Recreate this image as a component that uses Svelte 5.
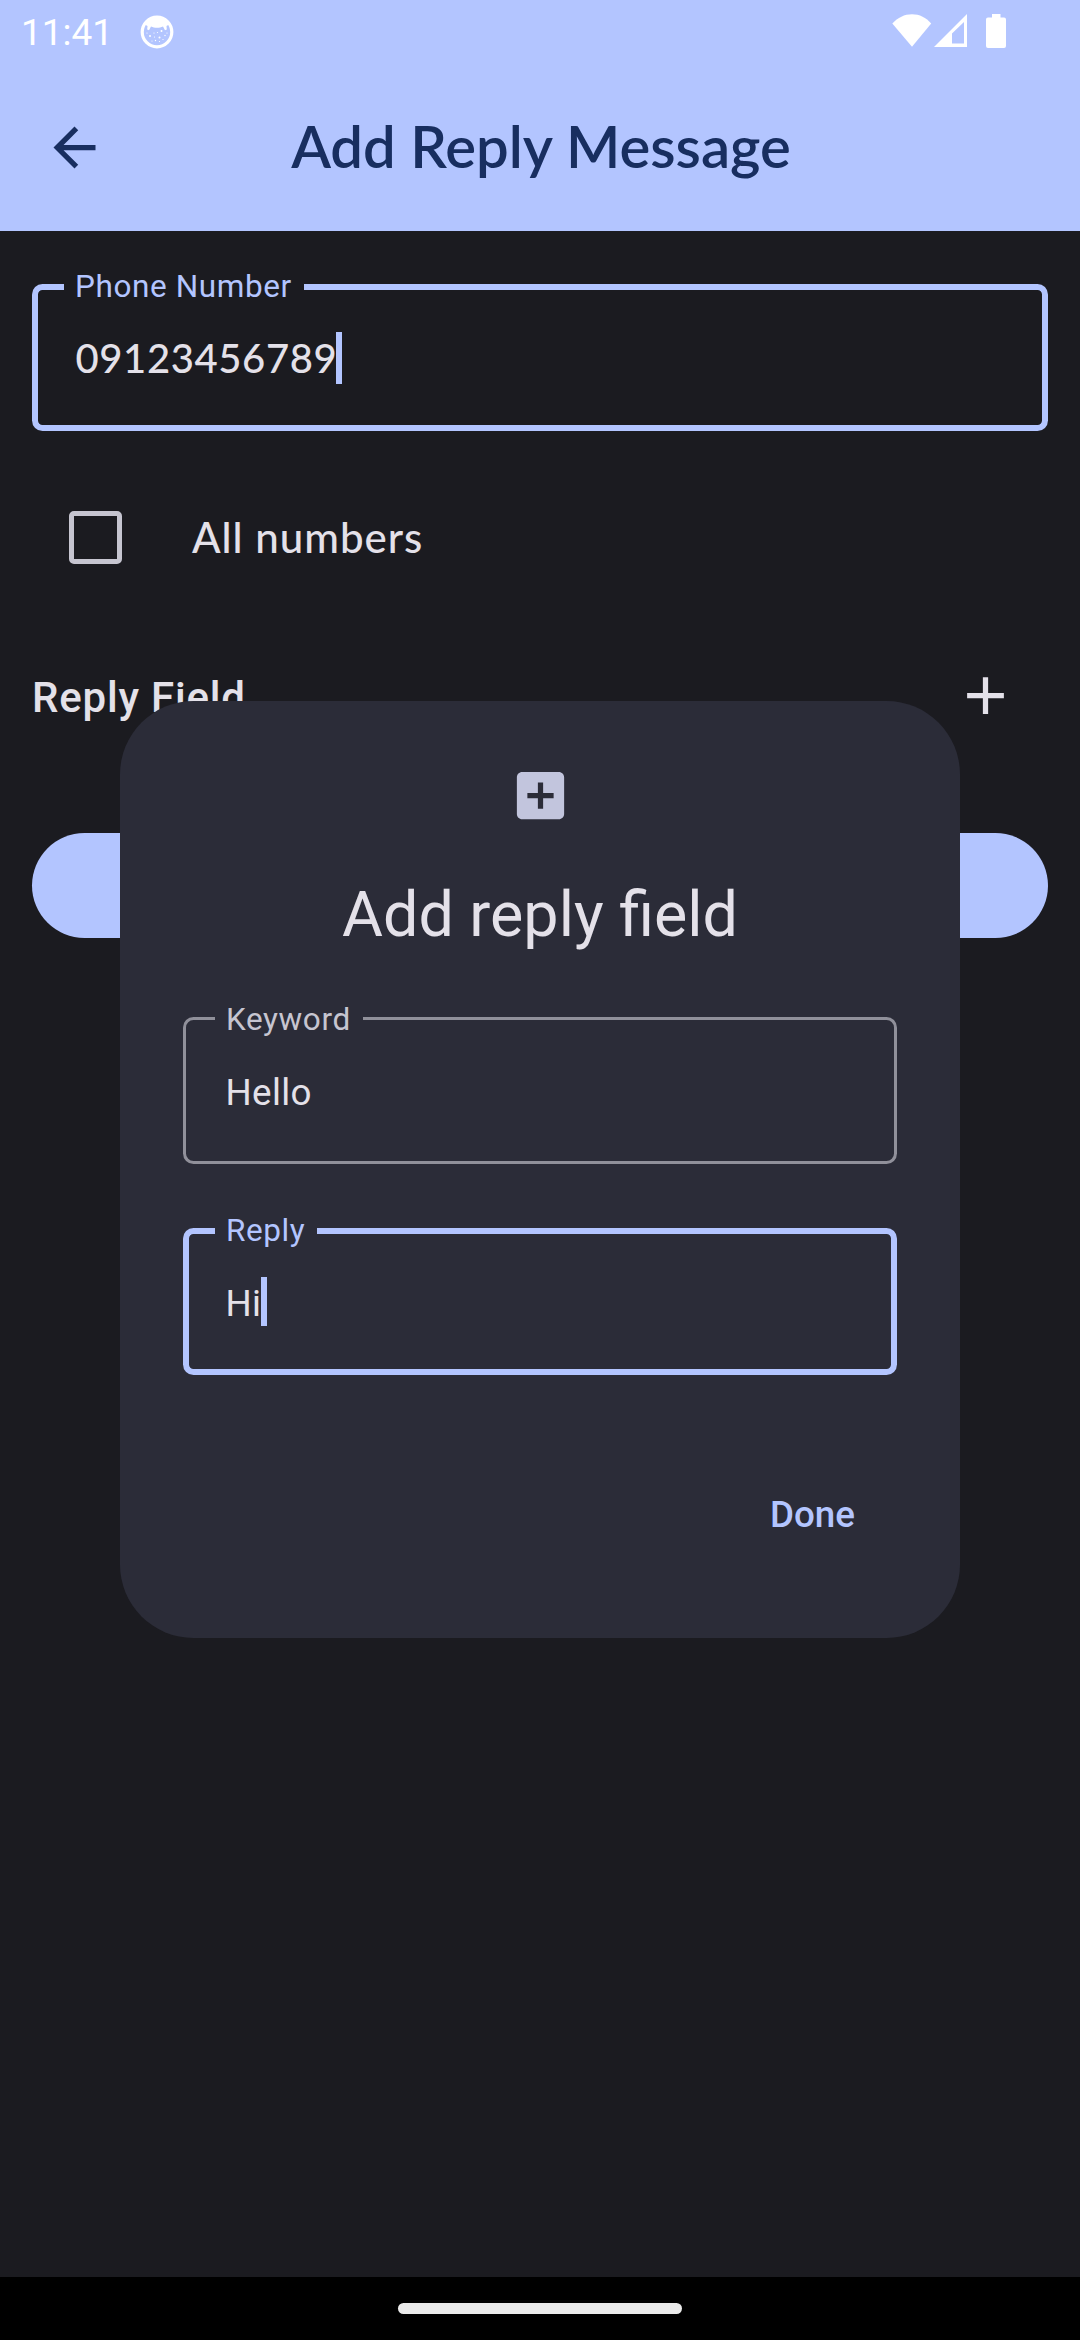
<script>
  let phone = $state('09123456789');
  const dialogFields = [
    { label: 'Keyword', value: 'Hello', focused: false },
    { label: 'Reply', value: 'Hi', focused: true }
  ];
</script>

<div class="screen">
  <header>
    <div class="status">
      <span class="time">11:41</span>
      <svg class="notif" width="34" height="34" viewBox="0 0 34 34">
        <circle cx="17" cy="17" r="14.8" fill="none" stroke="#fff" stroke-width="3.2" />
        <path d="M4 9C8 3 12 2 17 2S26 3 30 9L26.500 11l.3 3.500-1.800.8-2-3.800C19.500 13.300 14.500 13.300 11 11.500l-2 3.800-1.800-.8 .3-3.500z" fill="#fff" />
        <g fill="#fff">
          <circle cx="10" cy="21" r="1" /><circle cx="14" cy="18" r=".6" /><circle cx="21.500" cy="16" r="1" />
          <circle cx="19.500" cy="22.500" r="1" /><circle cx="25" cy="20.500" r=".7" /><circle cx="15.500" cy="25.500" r=".7" />
          <circle cx="7" cy="18" r=".6" /><circle cx="27" cy="18" r=".6" /><circle cx="17.500" cy="17.500" r=".6" />
          <circle cx="14.500" cy="22" r=".6" /><circle cx="19.500" cy="26.500" r=".6" /><circle cx="23" cy="24.500" r=".6" />
          <circle cx="12" cy="26" r=".6" />
        </g>
      </svg>
      <svg class="wifi" width="40" height="34" viewBox="0 0 40 34" fill="#fff">
        <path d="M20 32.800 .3 9.500C5.800 3.500 12.500.2 20 .2S34.200 3.500 39.200 9.500z" />
      </svg>
      <svg class="signal" width="33" height="33" viewBox="0 0 33 33" fill="#fff">
        <path fill-rule="evenodd" d="M33 0v33H0zM30 8 18 19.500V29.500h12z" />
      </svg>
      <svg class="battery" width="20" height="34" viewBox="0 0 20 34" fill="#fff">
        <path d="M6 0h8.500v3.500H18a2 2 0 0 1 2 2V32a2 2 0 0 1-2 2H2a2 2 0 0 1-2-2V5.500a2 2 0 0 1 2-2h4z" />
      </svg>
    </div>
    <div class="toolbar">
      <svg class="back" viewBox="0 0 24 24" fill="#182e60">
        <path d="M20 11H7.830l5.590-5.590L12 4l-8 8 8 8 1.410-1.410L7.830 13H20v-2z" />
      </svg>
      <h1>Add Reply Message</h1>
    </div>
  </header>

  <main>
    <div class="field focused phone">
      <span class="label">Phone Number</span>
      <span class="value">{phone}</span><i class="caret"></i>
    </div>

    <div class="check-row">
      <span class="checkbox"></span>
      <span class="check-text">All numbers</span>
    </div>

    <div class="reply-row">
      <h2>Reply Field</h2>
      <svg class="plus" viewBox="0 0 24 24" fill="#e4e1e9"><path d="M19 13h-6v6h-2v-6H5v-2h6V5h2v6h6v2z" /></svg>
    </div>

    <div class="submit"></div>
  </main>

  <nav><span class="pill"></span></nav>

  <section class="dialog">
    <svg class="dialog-icon" viewBox="0 0 24 24" fill="#c2c5dd">
      <path d="M19 3H5c-1.110 0-2 .9-2 2v14c0 1.100.89 2 2 2h14c1.100 0 2-.9 2-2V5c0-1.100-.9-2-2-2zm-2 10h-4v4h-2v-4H7v-2h4V7h2v4h4v2z" />
    </svg>
    <h3>Add reply field</h3>
    {#each dialogFields as f}
      <div class="field" class:focused={f.focused}>
        <span class="label">{f.label}</span>
        <span class="value">{f.value}</span>{#if f.focused}<i class="caret"></i>{/if}
      </div>
    {/each}
    <button>Done</button>
  </section>
</div>

<style>
  :global(body) { margin: 0; background: #1b1b20; }
  .screen {
    --primary: #b3c5ff;
    --surface: #1b1b20;
    position: relative;
    display: flex;
    flex-direction: column;
    width: 1080px;
    height: 2340px;
    overflow: hidden;
    background: var(--surface);
    color: #e4e1e9;
    font-family: Roboto, 'Liberation Sans', sans-serif;
  }
  h1, h2, h3 { margin: 0; }
  svg { display: block; flex: none; }

  header { height: 231px; background: var(--primary); }
  .status {
    display: flex;
    align-items: flex-start;
    box-sizing: border-box;
    height: 63px;
    padding: 14px 74px 0 21px;
    color: #fff;
  }
  .time { width: 119px; font-size: 37px; line-height: 37px; }
  .notif { margin: 1px auto 0 0; }
  .signal { margin-left: 2px; }
  .battery { margin-left: 19px; }
  .toolbar {
    display: grid;
    grid-template-columns: 63px 1fr 63px;
    align-items: center;
    height: 168px;
    padding: 0 43px;
  }
  .back { width: 63px; height: 63px; }
  h1 {
    padding: 0 0 3px 2px;
    color: #182e60;
    font: 600 58px/74px Lato, sans-serif;
    text-align: center;
  }

  main { flex: 1; padding: 53px 32px 0; }
  .field {
    position: relative;
    display: flex;
    align-items: center;
    box-sizing: border-box;
    height: 147px;
    padding-left: 42.5px;
    border-radius: 10.5px;
    box-shadow: inset 0 0 0 3px #90909a;
  }
  .field.focused { box-shadow: inset 0 0 0 6px var(--primary); }
  .label {
    position: absolute;
    top: -17px;
    left: 32px;
    padding: 0 12px 0 11px;
    background: var(--surface);
    color: #c6c5d0;
    font-size: 31.5px;
    line-height: 40px;
    letter-spacing: 0.6px;
    white-space: nowrap;
  }
  .focused .label { color: var(--primary); }
  .value { padding-top: 4px; font-size: 36.75px; line-height: 46px; letter-spacing: 0.35px; }
  .phone { padding-left: 43.5px; }
  .phone .value { padding-top: 0; font: 500 40px/52px Lato, sans-serif; letter-spacing: 0.6px; }
  .caret { width: 6px; height: 49px; background: var(--primary); }
  .phone .caret { height: 52px; margin-left: -1px; }

  .check-row { display: flex; align-items: center; height: 126px; margin-top: 43.5px; padding-left: 37px; }
  .checkbox { box-sizing: border-box; width: 53px; height: 53px; border: 5px solid #c6c5d0; border-radius: 5px; }
  .check-text { margin-left: 70px; padding-bottom: 2px; font: 500 42px/56px Lato, sans-serif; letter-spacing: 1px; }

  .reply-row { display: flex; align-items: center; justify-content: space-between; height: 126px; margin-top: 32px; }
  h2 { padding-top: 5px; font-size: 42px; font-weight: 500; line-height: 56px; letter-spacing: 0.8px; }
  .plus { width: 63px; height: 63px; margin-right: 31px; }
  .submit { height: 105px; margin-top: 74.5px; border-radius: 52.5px; background: var(--primary); }

  nav { display: flex; align-items: center; justify-content: center; height: 63px; background: #000; }
  .pill { width: 284px; height: 11px; border-radius: 6px; background: #ebebeb; }

  .dialog {
    --surface: #2b2c38;
    position: absolute;
    top: 701px;
    left: 120px;
    display: flex;
    flex-direction: column;
    box-sizing: border-box;
    width: 840px;
    height: 937px;
    padding: 63px 63px 71px;
    border-radius: 73.5px;
    background: var(--surface);
  }
  .dialog-icon { align-self: center; width: 63px; height: 63px; }
  h3 { margin: 46px 0 60px; font-size: 62.8px; font-weight: 400; line-height: 84px; text-align: center; }
  .field + .field { margin-top: 64px; }
  button {
    align-self: flex-end;
    height: 105px;
    margin-top: 87px;
    padding: 0 42px;
    border: 0;
    background: none;
    color: var(--primary);
    font: 500 36.75px/52px Roboto, sans-serif;
  }
</style>
